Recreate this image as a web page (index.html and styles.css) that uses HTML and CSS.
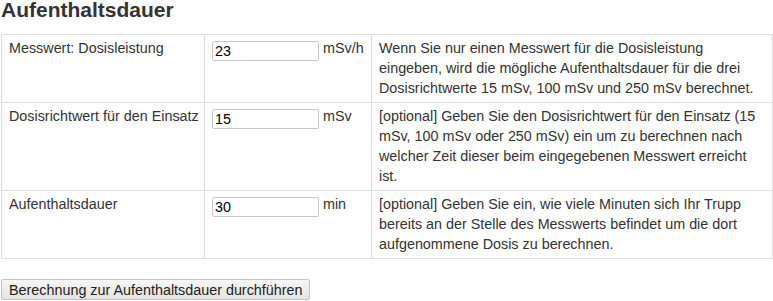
FILE: index.html
```html
<!DOCTYPE html>
<html>
<head>
<title>Aufenthaltsdauer</title>
<link rel="stylesheet" href="styles.css">
</head>
<body>
<div id="page">
 <h2 class="title">Aufenthaltsdauer</h2>
 <table class="calc">
  <colgroup>
   <col class="c1">
   <col class="c2">
   <col class="c3">
  </colgroup>
  <tr>
   <td class="lbl">Messwert: Dosisleistung</td>
   <td class="val"><input type="text" class="field" value="23"> mSv/h</td>
   <td>Wenn Sie nur einen Messwert für die Dosisleistung eingeben, wird die mögliche Aufenthaltsdauer für die drei Dosisrichtwerte 15 mSv, 100 mSv und 250 mSv berechnet.</td>
  </tr>
  <tr>
   <td class="lbl">Dosisrichtwert für den Einsatz</td>
   <td class="val"><input type="text" class="field" value="15"> mSv</td>
   <td>[optional] Geben Sie den Dosisrichtwert für den Einsatz (15 mSv, 100 mSv oder 250 mSv) ein um zu berechnen nach welcher Zeit dieser beim eingegebenen Messwert erreicht ist.</td>
  </tr>
  <tr>
   <td class="lbl">Aufenthaltsdauer</td>
   <td class="val"><input type="text" class="field" value="30"> min</td>
   <td>[optional] Geben Sie ein, wie viele Minuten sich Ihr Trupp bereits an der Stelle des Messwerts befindet um die dort aufgenommene Dosis zu berechnen.</td>
  </tr>
 </table>
 <button type="button" class="go">Berechnung zur Aufenthaltsdauer durchführen</button>
</div>
</body>
</html>
```

FILE: styles.css
```css
body {
 margin: 0;
 font-family: "Liberation Sans", Arial, sans-serif;
 font-size: 14.35px;
 color: #333;
 background: #fff;
}
#page {
 padding: 0 1px;
}
.title {
 font-size: 21px;
 font-weight: bold;
 line-height: 24px;
 margin: -2px 0 12px 0;
}
.calc {
 border-collapse: collapse;
 table-layout: fixed;
 width: 771px;
 font-size: 14.35px;
 line-height: 20px;
}
.c1 {
 width: 203px;
}
.c2 {
 width: 167px;
}
.c3 {
 width: 401px;
}
.calc td {
 border: 1px solid #ddd;
 padding: 3px 7px 4px 7px;
 vertical-align: top;
}
.lbl {
 white-space: nowrap;
}
.val {
 white-space: nowrap;
}
.field {
 width: 107px;
 height: 20px;
 box-sizing: border-box;
 border: 1px solid #c8c8c8;
 border-radius: 2px;
 padding: 1px 2px;
 font-family: "Liberation Sans", Arial, sans-serif;
 font-size: 14.35px;
 color: #000;
 vertical-align: -3px;
 margin-top: 2px;
}
.go {
 display: block;
 margin-top: 20px;
 height: 21px;
 padding: 0 7px;
 font-family: "Liberation Sans", Arial, sans-serif;
 font-size: 14.35px;
 color: #222;
 border: 1px solid #c4c4c4;
 border-radius: 2px;
 background: linear-gradient(#f6f6f6, #e4e4e4);
}
```
